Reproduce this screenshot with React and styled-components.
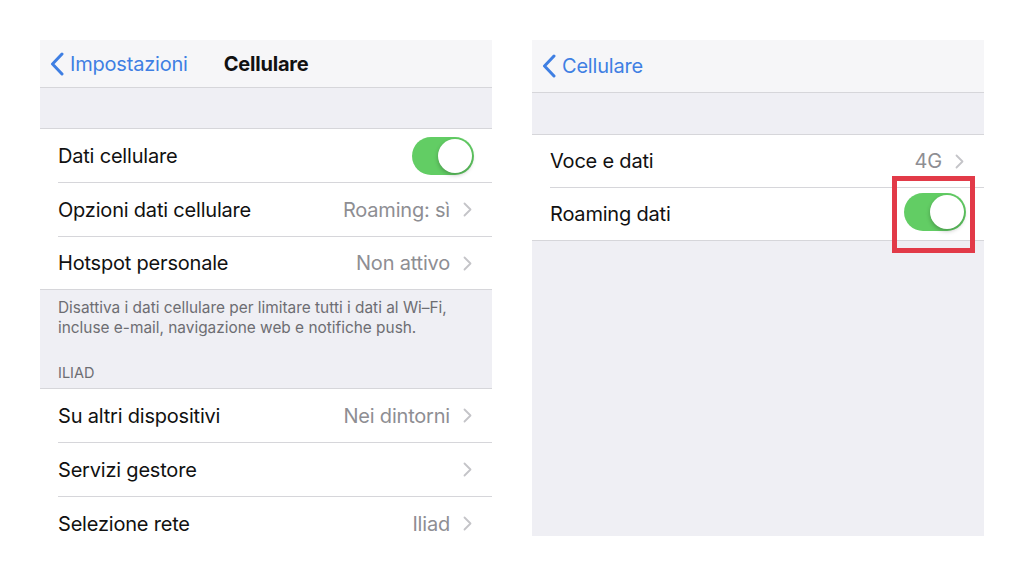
import styled, { createGlobalStyle } from "styled-components";

const GlobalStyle = createGlobalStyle`
  html, body {
    margin: 0;
    padding: 0;
    background: #ffffff;
  }
  body {
    font-family: "Inter", "Liberation Sans", "Noto Sans", sans-serif;
    -webkit-font-smoothing: antialiased;
  }
`;

const colors = {
  groupBg: "#efeff4",
  navBg: "#f6f6f8",
  separator: "#d6d6da",
  label: "#111111",
  detail: "#8e8e93",
  chevron: "#c4c4c8",
  blue: "#3f7fe3",
  green: "#62cd64",
  note: "#6d6d72",
};

const Page = styled.div`
  display: flex;
  gap: 40px;
  padding: 40px;
  align-items: flex-start;
`;

const Panel = styled.div`
  width: 452px;
  height: ${(p) => p.$height}px;
  display: flex;
  flex-direction: column;
  background: ${(p) => (p.$fill ? colors.groupBg : "#ffffff")};
  overflow: hidden;
`;

const NavBar = styled.div`
  height: ${(p) => p.$height}px;
  flex-shrink: 0;
  display: flex;
  align-items: center;
  background: ${colors.navBg};
  border-bottom: 1px solid ${colors.separator};
  padding-left: 10px;
`;

const BackLink = styled.div`
  display: flex;
  align-items: center;
  gap: 6px;
  color: ${colors.blue};
  font-size: 20px;
  letter-spacing: -0.2px;
`;

const NavTitle = styled.div`
  margin-left: 36px;
  font-size: 20px;
  font-weight: 700;
  color: ${colors.label};
  letter-spacing: -0.2px;
`;

const Spacer = styled.div`
  height: ${(p) => p.$height}px;
  flex-shrink: 0;
  background: ${colors.groupBg};
  border-bottom: 1px solid ${colors.separator};
`;

const Group = styled.div`
  background: #ffffff;
  border-bottom: ${(p) => (p.$last ? "none" : `1px solid ${colors.separator}`)};
`;

const Row = styled.div`
  height: ${(p) => p.$height}px;
  margin-left: 18px;
  padding-right: 18px;
  display: flex;
  align-items: center;
  justify-content: space-between;
  border-bottom: 1px solid ${colors.separator};
  &:last-child {
    border-bottom: none;
  }
`;

const Label = styled.span`
  font-size: 20px;
  color: ${colors.label};
  letter-spacing: -0.2px;
`;

const Accessory = styled.div`
  display: flex;
  align-items: center;
  gap: 13px;
  margin-right: 2px;
`;

const Detail = styled.span`
  font-size: 20px;
  color: ${colors.detail};
  letter-spacing: -0.2px;
`;

const Footer = styled.div`
  background: ${colors.groupBg};
  border-bottom: 1px solid ${colors.separator};
  padding: 8px 18px 7px 18px;
  height: 101px;
  box-sizing: border-box;
  display: flex;
  flex-direction: column;
`;

const Note = styled.p`
  margin: 0;
  font-size: 15.4px;
  line-height: 20px;
  color: ${colors.note};
  white-space: nowrap;
`;

const SectionHeader = styled.div`
  margin-top: auto;
  font-size: 14.5px;
  color: ${colors.note};
  text-transform: uppercase;
`;

const Highlight = styled.div`
  border: 5px solid #e23a48;
  padding: 12px 4px 17px 7px;
  margin-right: -9px;
  display: flex;
`;

const Track = styled.div`
  width: 62px;
  height: 38px;
  border-radius: 19px;
  background: ${colors.green};
  position: relative;
  flex-shrink: 0;
`;

const Knob = styled.div`
  position: absolute;
  top: 2px;
  right: 2px;
  width: 34px;
  height: 34px;
  border-radius: 50%;
  background: #ffffff;
  box-shadow: 0 2px 4px rgba(0, 0, 0, 0.25);
`;

const Chevron = () => (
  <svg width="9" height="15" viewBox="0 0 9 15">
    <polyline
      points="1.5,1.5 7.5,7.5 1.5,13.5"
      fill="none"
      stroke={colors.chevron}
      strokeWidth="1.8"
      strokeLinecap="round"
      strokeLinejoin="round"
    />
  </svg>
);

const BackChevron = () => (
  <svg width="14" height="24" viewBox="0 0 14 24">
    <polyline
      points="12,2 2.5,12 12,22"
      fill="none"
      stroke={colors.blue}
      strokeWidth="3"
      strokeLinecap="round"
      strokeLinejoin="round"
    />
  </svg>
);

const Toggle = () => (
  <Track>
    <Knob />
  </Track>
);

const DetailRow = ({ label, value, height }) => (
  <Row $height={height}>
    <Label>{label}</Label>
    <Accessory>
      {value && <Detail>{value}</Detail>}
      <Chevron />
    </Accessory>
  </Row>
);

export default function App() {
  return (
    <>
      <GlobalStyle />
      <Page>
        <Panel $height={510}>
          <NavBar $height={47}>
            <BackLink>
              <BackChevron />
              Impostazioni
            </BackLink>
            <NavTitle>Cellulare</NavTitle>
          </NavBar>
          <Spacer $height={40} />
          <Group>
            <Row $height={53}>
              <Label>Dati cellulare</Label>
              <Toggle />
            </Row>
            <DetailRow height={53} label="Opzioni dati cellulare" value="Roaming: sì" />
            <DetailRow height={52} label="Hotspot personale" value="Non attivo" />
          </Group>
          <Footer>
            <Note>
              Disattiva i dati cellulare per limitare tutti i dati al Wi–Fi,
              <br />
              incluse e-mail, navigazione web e notifiche push.
            </Note>
            <SectionHeader>Iliad</SectionHeader>
          </Footer>
          <Group $last>
            <DetailRow height={53} label="Su altri dispositivi" value="Nei dintorni" />
            <DetailRow height={53} label="Servizi gestore" />
            <DetailRow height={53} label="Selezione rete" value="Iliad" />
          </Group>
        </Panel>

        <Panel $height={496} $fill>
          <NavBar $height={52}>
            <BackLink>
              <BackChevron />
              Cellulare
            </BackLink>
          </NavBar>
          <Spacer $height={41} />
          <Group>
            <DetailRow height={52} label="Voce e dati" value="4G" />
            <Row $height={52}>
              <Label>Roaming dati</Label>
              <Highlight>
                <Toggle />
              </Highlight>
            </Row>
          </Group>
        </Panel>
      </Page>
    </>
  );
}
